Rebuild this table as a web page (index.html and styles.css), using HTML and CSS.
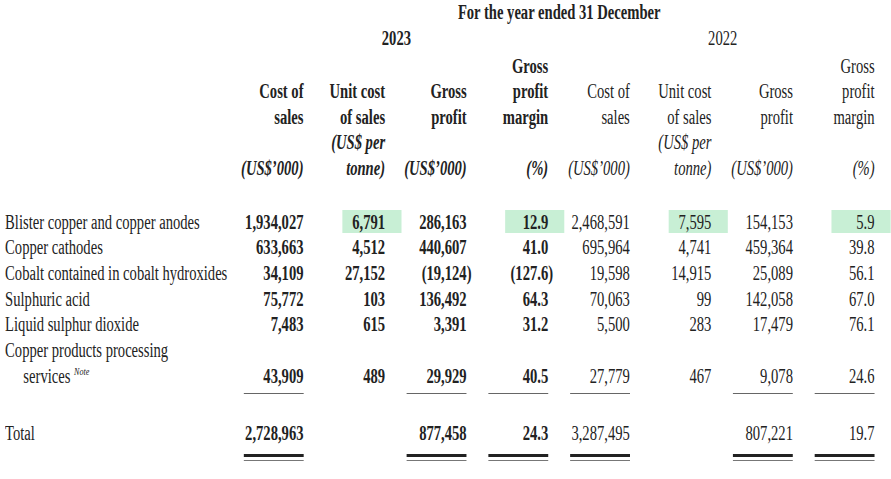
FILE: index.html
```html
<!DOCTYPE html>
<html lang="en">
<head>
<meta charset="utf-8">
<title>Cost of sales and gross profit</title>
<link rel="stylesheet" href="styles.css">
</head>
<body>
<div class="page">
<div class="sheet">
<table class="fin">
  <colgroup>
    <col class="c-label">
    <col class="c-num"><col class="c-num"><col class="c-num"><col class="c-num">
    <col class="c-num"><col class="c-num"><col class="c-num"><col class="c-num">
  </colgroup>
  <thead>
    <tr class="r-title">
      <td></td>
      <td colspan="8" class="title">For the year ended 31 December</td>
    </tr>
    <tr class="r-year">
      <td></td>
      <td colspan="4" class="year b">2023</td>
      <td colspan="4" class="year">2022</td>
    </tr>
    <tr class="r-head">
      <td></td>
      <th class="b">Cost of<br>sales<br><br><i>(US$’000)</i></th>
      <th class="b">Unit cost<br>of sales<br><i>(US$ per</i><br><i>tonne)</i></th>
      <th class="b">Gross<br>profit<br><br><i>(US$’000)</i></th>
      <th class="b">Gross<br>profit<br>margin<br><br><i>(%)</i></th>
      <th>Cost of<br>sales<br><br><i>(US$’000)</i></th>
      <th>Unit cost<br>of sales<br><i>(US$ per</i><br><i>tonne)</i></th>
      <th>Gross<br>profit<br><br><i>(US$’000)</i></th>
      <th>Gross<br>profit<br>margin<br><br><i>(%)</i></th>
    </tr>
  </thead>
  <tbody>
    <tr class="first">
      <td class="label">Blister copper and copper anodes</td>
      <td class="b">1,934,027</td>
      <td class="b hl"><div class="hlbox">6,791</div></td>
      <td class="b">286,163</td>
      <td class="b hl"><div class="hlbox">12.9</div></td>
      <td>2,468,591</td>
      <td class="hl"><div class="hlbox">7,595</div></td>
      <td>154,153</td>
      <td class="hl"><div class="hlbox">5.9</div></td>
    </tr>
    <tr>
      <td class="label">Copper cathodes</td>
      <td class="b">633,663</td>
      <td class="b">4,512</td>
      <td class="b">440,607</td>
      <td class="b">41.0</td>
      <td>695,964</td>
      <td>4,741</td>
      <td>459,364</td>
      <td>39.8</td>
    </tr>
    <tr>
      <td class="label">Cobalt contained in cobalt hydroxides</td>
      <td class="b">34,109</td>
      <td class="b">27,152</td>
      <td class="b"><span class="neg">(19,124)</span></td>
      <td class="b"><span class="neg">(127.6)</span></td>
      <td>19,598</td>
      <td>14,915</td>
      <td>25,089</td>
      <td>56.1</td>
    </tr>
    <tr>
      <td class="label">Sulphuric acid</td>
      <td class="b">75,772</td>
      <td class="b">103</td>
      <td class="b">136,492</td>
      <td class="b">64.3</td>
      <td>70,063</td>
      <td>99</td>
      <td>142,058</td>
      <td>67.0</td>
    </tr>
    <tr>
      <td class="label">Liquid sulphur dioxide</td>
      <td class="b">7,483</td>
      <td class="b">615</td>
      <td class="b">3,391</td>
      <td class="b">31.2</td>
      <td>5,500</td>
      <td>283</td>
      <td>17,479</td>
      <td>76.1</td>
    </tr>
    <tr>
      <td class="label">Copper products processing</td>
      <td colspan="8"></td>
    </tr>
    <tr>
      <td class="label indent">services <sup class="note">Note</sup></td>
      <td class="b"><div class="ul">43,909</div></td>
      <td class="b">489</td>
      <td class="b"><div class="ul">29,929</div></td>
      <td class="b"><div class="ul">40.5</div></td>
      <td><div class="ul">27,779</div></td>
      <td>467</td>
      <td><div class="ul">9,078</div></td>
      <td><div class="ul">24.6</div></td>
    </tr>
    <tr class="total">
      <td class="label">Total</td>
      <td class="b"><div class="dbl"><span>2,728,963</span></div></td>
      <td class="b"></td>
      <td class="b"><div class="dbl"><span>877,458</span></div></td>
      <td class="b"><div class="dbl"><span>24.3</span></div></td>
      <td><div class="dbl"><span>3,287,495</span></div></td>
      <td></td>
      <td><div class="dbl"><span>807,221</span></div></td>
      <td><div class="dbl"><span>19.7</span></div></td>
    </tr>
  </tbody>
</table>
</div>
</div>
</body>
</html>
```

FILE: styles.css
```css
html, body {
  margin: 0;
  padding: 0;
  background: #ffffff;
  overflow: hidden;
}

.page {
  width: 891px;
  height: 479px;
  overflow: hidden;
}

.sheet {
  width: 1220px;
  transform: scaleX(0.73);
  transform-origin: 0 0;
  font-family: "Liberation Serif", "Times New Roman", serif;
  font-size: 20px;
  color: #222222;
}

.fin {
  border-collapse: collapse;
  border-spacing: 0;
  table-layout: fixed;
  width: 1220px;
}

.c-label { width: 326px; }
.c-num { width: 111.75px; }

.fin td,
.fin th {
  padding: 0 22px 0 0;
  line-height: 25.6px;
  text-align: right;
  vertical-align: bottom;
  font-weight: normal;
  white-space: nowrap;
}

.fin .b { font-weight: bold; }

.fin .title {
  font-weight: bold;
  text-align: center;
  padding-right: 14px;
}

.fin .year {
  text-align: center;
  padding-right: 13px;
}

.r-head td,
.r-head th {
  padding-top: 2.4px;
}

.fin i { font-style: italic; }

.fin tbody td {
  line-height: 25.67px;
  vertical-align: top;
}

.fin tbody tr.first td { padding-top: 28px; }

.fin .label {
  text-align: left;
  padding-left: 7px;
  padding-right: 0;
}

.fin .label.indent { padding-left: 32px; }

.note {
  font-size: 11px;
  font-style: italic;
  line-height: 0;
  vertical-align: 8px;
}

.fin td.hl { padding-right: 0; }

.hlbox {
  width: 81px;
  height: 23px;
  margin-left: auto;
  padding-right: 22px;
  box-sizing: border-box;
  background: #c8efd5;
}

.neg { margin-right: -0.333em; }

.ul {
  width: 82px;
  margin-left: auto;
  padding-bottom: 4px;
  border-bottom: 1px solid #666666;
}

.fin tbody tr.total td { padding-top: 26.3px; }

.dbl {
  width: 82px;
  margin-left: auto;
  padding-bottom: 3.5px;
  border-bottom: 1px solid #777777;
}

.dbl > span {
  display: block;
  padding-bottom: 7.5px;
  border-bottom: 3px solid #222222;
}
```
